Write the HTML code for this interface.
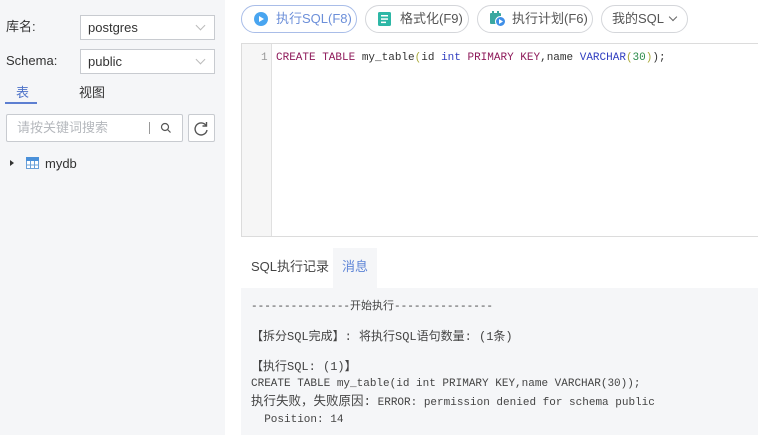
<!DOCTYPE html>
<html><head><meta charset="utf-8"><style>
*{box-sizing:border-box;margin:0;padding:0}
body{width:758px;height:435px;overflow:hidden;background:#fff;font-family:"Liberation Sans","Noto Sans CJK SC",sans-serif;font-size:13px;line-height:16px;color:#333;position:relative}
div,span{line-height:16px}
.left{position:absolute;left:0;top:0;width:225px;height:435px;background:#f5f6f8}
.lbl{position:absolute;left:6px;font-size:13px;color:#333}
.sel{position:absolute;left:80px;width:135px;height:25px;border:1px solid #c8cbd0;background:#fff;font-size:13px;padding-left:7px;line-height:23px;color:#333}
.sel:after{content:"";position:absolute;right:10px;top:6px;width:6px;height:6px;border-right:1px solid #bbb;border-bottom:1px solid #bbb;transform:rotate(45deg)}
.btn{position:absolute;top:5px;height:28px;border:1px solid #d4d6da;border-radius:14px;background:#fff;font-size:13px;color:#555}
.btn span{line-height:26px}
.mono{font-family:"Liberation Mono","Noto Sans CJK SC",monospace;font-size:11px;line-height:14px}
.mono span{line-height:14px}
.k{color:#8e1a5a}.b{color:#303ec0}.p{color:#a9a93a}
</style></head><body>
<div class="left">
 <div class="lbl" style="top:19px">库名:</div>
 <div class="sel" style="top:15px">postgres</div>
 <div class="lbl" style="top:53px">Schema:</div>
 <div class="sel" style="top:49px">public</div>
 <div style="position:absolute;left:16px;top:85px;color:#4e73c9;font-size:13px">表</div>
 <div style="position:absolute;left:5px;top:102px;width:32px;height:2px;background:#5d7fd1"></div>
 <div style="position:absolute;left:79px;top:85px;font-size:13px;color:#333">视图</div>
 <div style="position:absolute;left:6px;top:114px;width:177px;height:28px;border:1px solid #c8cbd0;background:#fff;border-radius:2px">
  <span style="position:absolute;left:10px;top:5px;color:#b5b8bd;font-size:13px">请按关键词搜索</span>
  <span style="position:absolute;left:142px;top:7px;width:1px;height:12px;background:#999"></span>
  <svg style="position:absolute;left:153px;top:7px" width="12" height="12"><circle cx="5" cy="5" r="3.5" fill="none" stroke="#555" stroke-width="1.2"/><line x1="7.5" y1="7.5" x2="10.5" y2="10.5" stroke="#555" stroke-width="1.2"/></svg>
 </div>
 <div style="position:absolute;left:188px;top:114px;width:27px;height:28px;border:1px solid #c8cbd0;background:#fff;border-radius:2px">
  <svg style="position:absolute;left:5px;top:6px" width="15" height="15"><path d="M12 4.5A6 6 0 1 0 13 9" fill="none" stroke="#555" stroke-width="1.4"/><path d="M12.5 1v4h-4" fill="none" stroke="#555" stroke-width="1.4"/></svg>
 </div>
 <div style="position:absolute;left:10px;top:160px;width:0;height:0;border-left:4px solid #333;border-top:3.5px solid transparent;border-bottom:3.5px solid transparent"></div>
 <svg style="position:absolute;left:26px;top:157px" width="13" height="12"><rect x="0.5" y="0.5" width="12" height="11" fill="#fff" stroke="#6aa0d8"/><rect x="0" y="0" width="13" height="4" fill="#4a90d9"/><line x1="4.5" y1="4" x2="4.5" y2="12" stroke="#6aa0d8"/><line x1="8.5" y1="4" x2="8.5" y2="12" stroke="#6aa0d8"/><line x1="0" y1="8" x2="13" y2="8" stroke="#6aa0d8"/></svg>
 <div style="position:absolute;left:45px;top:156px;font-size:13px;color:#333">mydb</div>
</div>

<div class="btn" style="left:241px;width:116px;border-color:#a9bde8;color:#6c8fd9">
 <svg style="position:absolute;left:12px;top:6px" width="14" height="14"><circle cx="7" cy="7" r="7" fill="#49a5f0"/><path d="M5 4v6l5-3z" fill="#fff"/></svg>
 <span style="position:absolute;left:34px">执行SQL(F8)</span></div>
<div class="btn" style="left:365px;width:104px">
 <svg style="position:absolute;left:12px;top:6px" width="13" height="14"><rect width="13" height="14" rx="1.5" fill="#2db7a6"/><rect x="3" y="3" width="7" height="1.5" fill="#fff"/><rect x="3" y="6.3" width="7" height="1.5" fill="#fff"/><rect x="3" y="9.6" width="5" height="1.5" fill="#fff"/></svg>
 <span style="position:absolute;left:34px">格式化(F9)</span></div>
<div class="btn" style="left:477px;width:116px">
 <svg style="position:absolute;left:11px;top:4px" width="17" height="17"><rect x="1" y="3" width="11" height="11" rx="1" fill="#3aa7a0"/><rect x="3" y="1" width="2" height="3" fill="#3aa7a0"/><rect x="8" y="1" width="2" height="3" fill="#3aa7a0"/><circle cx="11.5" cy="11.5" r="5" fill="#3f8fe8" stroke="#fff"/><path d="M10 9v5l4-2.5z" fill="#fff"/></svg>
 <span style="position:absolute;left:34px">执行计划(F6)</span></div>
<div class="btn" style="left:601px;width:87px">
 <span style="position:absolute;left:10px">我的SQL</span>
 <span style="position:absolute;left:68px;top:8px;width:6px;height:6px;border-right:1px solid #666;border-bottom:1px solid #666;transform:rotate(45deg)"></span></div>

<div style="position:absolute;left:241px;top:43px;width:520px;height:194px;border:1px solid #dcdcdc;background:#fff">
 <div style="position:absolute;left:0;top:0;width:30px;height:192px;background:#f6f6f6;border-right:1px solid #e0e0e0"></div>
 <div class="mono" style="position:absolute;left:19px;top:7px;color:#999">1</div>
 <div class="mono" style="position:absolute;left:34px;top:7px;color:#333;white-space:pre"><span class="k">CREATE TABLE</span> my_table<span class="p">(</span>id <span class="b">int</span> <span class="k">PRIMARY KEY</span>,name <span class="b">VARCHAR</span><span class="p">(</span><span style="color:#2a8a4a">30</span><span class="p">)</span>);</div>
</div>

<div style="position:absolute;left:251px;top:259px;font-size:13px;color:#444">SQL执行记录</div>
<div style="position:absolute;left:333px;top:248px;width:44px;height:40px;background:#f5f6f8;color:#5d84d6;font-size:13px;text-align:center;padding-top:11px">消息</div>
<div style="position:absolute;left:241px;top:288px;width:520px;height:147px;background:#f5f6f8;color:#444">
 <div class="mono" style="position:absolute;left:10px;top:12px;white-space:pre">---------------开始执行---------------</div>
 <div class="mono" style="position:absolute;left:10px;top:42px;white-space:pre;font-size:12px">【拆分SQL完成】: 将执行SQL语句数量: (1条)</div>
 <div class="mono" style="position:absolute;left:10px;top:72px;white-space:pre;font-size:12px">【执行SQL: (1)】</div>
 <div class="mono" style="position:absolute;left:10px;top:89px;white-space:pre">CREATE TABLE my_table(id int PRIMARY KEY,name VARCHAR(30));</div>
 <div class="mono" style="position:absolute;left:10px;top:107px;white-space:pre"><span style="font-size:12.5px">执行失败，失败原因:</span> ERROR: permission denied for schema public</div>
 <div class="mono" style="position:absolute;left:10px;top:125px;white-space:pre">  Position: 14</div>
</div>
</body></html>
